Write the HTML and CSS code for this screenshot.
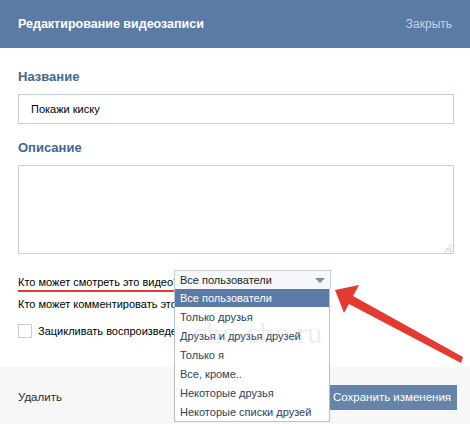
FILE: index.html
```
<!DOCTYPE html>
<html lang="ru">
<head>
<meta charset="utf-8">
<link rel="stylesheet" href="styles.css">
</head>
<body>
<div class="dialog">
  <div class="header">
    <div class="title">Редактирование видеозаписи</div>
    <div class="close">Закрыть</div>
  </div>
  <div class="content">
    <div class="label">Название</div>
    <div class="input">Покажи киску</div>
    <div class="label label2">Описание</div>
    <div class="textarea">
      <svg class="grip" width="8" height="8" viewBox="0 0 8 8"><path d="M1 7.5L7.5 1M4 7.5L7.5 4M6.5 7.5L7.5 6.5" stroke="#666" stroke-width="0.8" stroke-dasharray="1 1" fill="none"/></svg>
    </div>
    <div class="row row-view"><span class="underlined">Кто может смотреть это видео?</span></div>
    <div class="row row-comment">Кто может комментировать это видео?</div>
    <div class="row check-row"><span class="checkbox"></span>Зацикливать воспроизведение</div>
  </div>
  <div class="footer">
    <span class="delete">Удалить</span>
    <span class="save">Сохранить изменения</span>
  </div>

  <div class="select">
    <div class="select-box">Все пользователи<span class="caret"></span></div>
    <ul class="options">
      <li class="active">Все пользователи</li>
      <li>Только друзья</li>
      <li>Друзья и друзья друзей</li>
      <li>Только я</li>
      <li>Все, кроме..</li>
      <li>Некоторые друзья</li>
      <li>Некоторые списки друзей</li>
    </ul>
  </div>
  <div class="watermark">cho-cho.ru</div>
  <svg class="arrow" width="470" height="424" viewBox="0 0 470 424">
    <polygon points="335,290 359,285 353,296 463,357 461,363 349,304 344,313" fill="#e53a30"/>
  </svg>
</div>
</body>
</html>
```
FILE: styles.css
```
* { box-sizing: border-box; }
html, body { margin: 0; padding: 0; }
body {
  width: 470px;
  height: 424px;
  overflow: hidden;
  background: #fff;
  font-family: "Liberation Sans", Arial, sans-serif;
  font-size: 11px;
  color: #000;
}
.dialog {
  position: relative;
  width: 470px;
  height: 424px;
  display: flex;
  flex-direction: column;
}
.header {
  height: 48px;
  flex: none;
  background: #5b7ba6;
  display: flex;
  align-items: center;
  justify-content: space-between;
  padding: 0 18px 0 18px;
}
.title {
  color: #fff;
  font-weight: bold;
  font-size: 12.5px;
}
.close {
  color: #c4d2e6;
  font-size: 12px;
}
.content {
  flex: 1;
  padding: 21px 16px 0 18px;
}
.label {
  font-weight: bold;
  font-size: 13px;
  color: #45678f;
  height: 16px;
  line-height: 16px;
}
.label2 { margin-top: 16px; }
.input {
  margin-top: 9px;
  width: 436px;
  height: 30px;
  border: 1px solid #c5ced9;
  padding: 0 0 0 12px;
  display: flex;
  align-items: center;
  font-size: 11px;
}
.textarea {
  margin-top: 9px;
  width: 436px;
  height: 89px;
  border: 1px solid #c5ced9;
  position: relative;
}
.grip { position: absolute; right: 1px; bottom: 1px; }
.row {
  font-size: 11px;
  color: #000;
  height: 20px;
  display: flex;
  align-items: center;
  white-space: nowrap;
}
.row-view { margin-top: 17px; }
.row-comment { margin-top: 3px; }
.underlined {
  border-bottom: 2px solid #e53a30;
  padding-bottom: 1px;
  line-height: 14px;
  margin-top: 4px;
}
.check-row { margin-top: 7px; }
.checkbox {
  width: 14px;
  height: 14px;
  border: 1px solid #c5ced9;
  margin-right: 6px;
  background: #fff;
}
.footer {
  height: 57px;
  flex: none;
  background: #f7f7f7;
  display: flex;
  align-items: center;
  justify-content: space-between;
  padding: 3px 13px 0 18px;
  font-size: 11.5px;
}
.delete { color: #2b2b2b; }
.save {
  background: #6584aa;
  color: #fff;
  width: 128px;
  height: 25px;
  padding: 0 0 0 4px;
  display: flex;
  align-items: center;
  white-space: nowrap;
}
.select {
  position: absolute;
  left: 174px;
  top: 270px;
  width: 157px;
  font-size: 11px;
}
.select-box {
  height: 19px;
  background: #f5f7fa;
  border: 1px solid #c5ced9;
  border-bottom: none;
  padding-left: 5px;
  display: flex;
  align-items: center;
  justify-content: space-between;
  color: #222;
}
.caret {
  width: 0;
  height: 0;
  border-left: 5px solid transparent;
  border-right: 5px solid transparent;
  border-top: 5px solid #7a8aa0;
  margin-right: 5px;
}
.options {
  list-style: none;
  margin: 0;
  padding: 0;
  background: #fff;
  border: 1px solid #b7c2cf;
  border-top: none;
  width: 156px;
}
.options li {
  height: 19px;
  padding-left: 5px;
  display: flex;
  align-items: center;
  color: #2a3f5a;
}
.options li.active {
  background: #5b7ba6;
  color: #fff;
  height: 18px;
}
.watermark {
  position: absolute;
  left: 193px;
  top: 316px;
  font-family: "Liberation Serif", serif;
  font-size: 30px;
  color: rgba(180, 180, 180, 0.25);
  pointer-events: none;
}
.arrow {
  position: absolute;
  left: 0;
  top: 0;
  pointer-events: none;
}
```
